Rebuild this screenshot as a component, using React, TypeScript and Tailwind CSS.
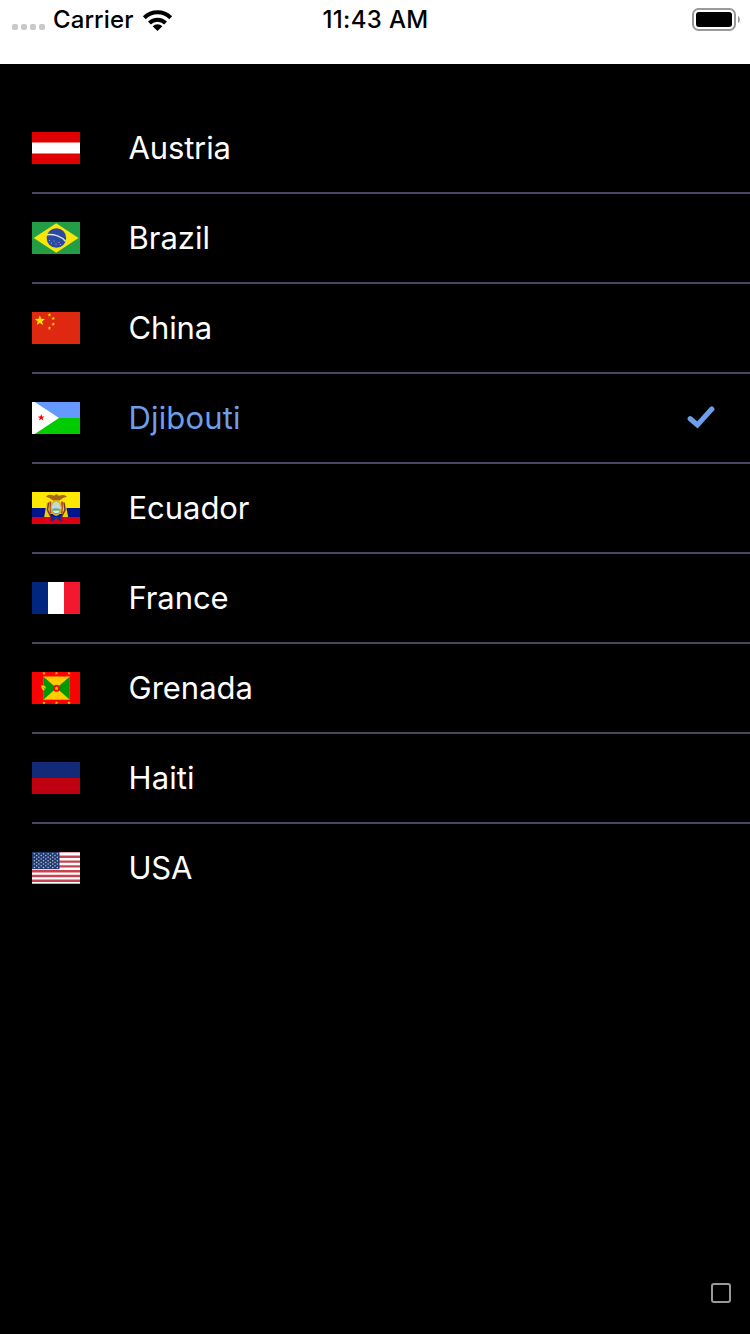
import React from 'react';

const star = (cx: number, cy: number, r: number) =>
  Array.from({ length: 10 }, (_, i) => {
    const a = (Math.PI * i) / 5 - Math.PI / 2;
    const q = i % 2 ? r * 0.42 : r;
    return `${cx + q * Math.cos(a)},${cy + q * Math.sin(a)}`;
  }).join(' ');

const dot = (cx: number, cy: number, r: number, fill: string) => <circle cx={cx} cy={cy} r={r} fill={fill} />;

const flags: Record<string, React.ReactNode> = {
  Austria: (
    <>
      <path fill="#df0000" d="M0 0h48v32H0z" />
      <path fill="#fff" d="M0 10.4h48v11.2H0z" />
    </>
  ),
  Brazil: (
    <>
      <path fill="#229e45" d="M0 0h48v32H0z" />
      <path fill="#f8e509" d="M1.7 16 24.2 1.3 46.5 16 24.2 30.7z" />
      <circle cx="24.4" cy="16" r="9.8" fill="#2b49a3" />
      <path d="M15 12.8c7-.9 14.5 1.6 18.7 6.6" fill="none" stroke="#d5e3e6" strokeWidth="1.5" />
      {dot(17.5, 18.5, 0.6, '#a9bde0')}
      {dot(19.5, 21, 0.6, '#a9bde0')}
      {dot(22, 19, 0.5, '#a9bde0')}
      {dot(24, 22, 0.6, '#a9bde0')}
      {dot(27, 20.5, 0.6, '#a9bde0')}
      {dot(28.5, 22.5, 0.6, '#a9bde0')}
      {dot(26, 13, 0.4, '#a9bde0')}
    </>
  ),
  China: (
    <>
      <path fill="#de2910" d="M0 0h48v32H0z" />
      <polygon points={star(7.9, 8.7, 5.4)} fill="#ffde00" />
      <polygon points={star(17.4, 2.9, 1.9)} fill="#ffde00" />
      <polygon points={star(21.2, 6.5, 1.9)} fill="#ffde00" />
      <polygon points={star(21.2, 12.2, 1.9)} fill="#ffde00" />
      <polygon points={star(17.4, 16.1, 1.9)} fill="#ffde00" />
    </>
  ),
  Djibouti: (
    <>
      <path fill="#0c0" d="M0 16h48v16H0z" />
      <path fill="#69f" d="M0 0h48v16H0z" />
      <path fill="#fffefe" d="M0 0h2.8L27 16 2.8 32H0z" />
      <polygon points={star(9.2, 15.6, 3.5)} fill="red" />
    </>
  ),
  Ecuador: (
    <>
      <path fill="#ffe800" d="M0 0h48v16H0z" />
      <path fill="#00148e" d="M0 16h48v9H0z" />
      <path fill="#da0010" d="M0 25h48v7H0z" />
      <path fill="#f0d000" d="m14.5 11-2.3 14h6v-3h12v3h6L33.5 11z" />
      <path fill="#a5641c" d="M14 4.8c2-2.4 5-2.4 8-1L24.3 2 27 3.8c3-1.4 6-1.2 8 1l-4 1.2-3.5 2.5H21L17.5 6z" />
      <path d="M16.5 10.5 15.5 18l3.5 7M32 10.5l1 7.5-3.5 7" fill="none" stroke="#6b3a22" strokeWidth="1.5" />
      <path d="m18.3 9.5.4 12M30.1 9.5l-.4 12" fill="none" stroke="#c0382c" strokeWidth="1.8" />
      <path fill="#1b298f" d="m18.5 23 5.7 3 5.7-3-1 4 1.5 2h-2l-4.2-2.5L21 29h-2z" />
      <ellipse cx="24.2" cy="16" rx="5.7" ry="7.9" fill="#dcb018" />
      <ellipse cx="24.2" cy="16" rx="4.4" ry="6.5" fill="#b4dfe6" />
      <path fill="#79a878" d="M20 17.5c3-2 5-1 8.4-.3-.2 3.4-1.9 5.1-4.1 5.3-2.3-.2-3.9-1.9-4.3-5z" />
      <path fill="#d5ecec" d="M20.6 18.8h7.2L26 21h-3.5z" />
      {dot(24.2, 12, 0.9, '#f0d85a')}
      {dot(24.2, 28, 1, '#b01b2a')}
    </>
  ),
  France: (
    <>
      <path fill="#fff" d="M0 0h48v32H0z" />
      <path fill="#00267f" d="M0 0h16v32H0z" />
      <path fill="#f31830" d="M32 0h16v32H32z" />
    </>
  ),
  Grenada: (
    <>
      <path fill="red" d="M0 0h48v32H0z" />
      <path fill="#fc0" d="M11.3 4.5h26.5v23.2H11.3z" />
      <path fill="#090" d="m11.3 4.5 13.2 11.6-13.2 11.6zM37.8 4.5 24.5 16.1l13.3 11.6z" />
      <circle cx="24.5" cy="16.3" r="3.5" fill="red" />
      <polygon points={star(24.5, 16.4, 2.4)} fill="#fc0" />
      <path d="M9.8 13.4c.4 3 1.2 4.1 2.6 4.7M10 14c2 .1 3.2 1 3.1 2.5" fill="none" stroke="#fc0" strokeWidth="1.6" />
      {[12, 24.5, 37].map((x) => (
        <g key={x}>
          <polygon points={star(x, 1.3, 1.8)} fill="#fc0" />
          <polygon points={star(x, 30.8, 1.8)} fill="#fc0" />
        </g>
      ))}
    </>
  ),
  Haiti: (
    <>
      <path fill="#112b79" d="M0 0h48v16H0z" />
      <path fill="#be0010" d="M0 16h48v16H0z" />
    </>
  ),
  USA: (
    <>
      <path fill="#fff" d="M0 0h48v32H0z" />
      <path fill="#d98c94" d="M0 0h48v.8H0zM0 31.2h48v.8H0z" />
      {[1, 2, 3, 4, 5, 6].map((i) => (
        <path key={i} fill="#c7434f" d={`M0 ${i * 4.8 - 1.2}h48v2.4H0z`} />
      ))}
      <path fill="#233c70" d="M0 0h27.5v17.2H0z" />
      {Array.from({ length: 50 }, (_, n) => {
        const row = Math.floor(n / 11) * 2 + (n % 11 > 5 ? 1 : 0);
        const col = n % 11 > 5 ? (n % 11) - 5.5 : n % 11;
        return <circle key={n} cx={2.3 + col * 4.6} cy={1.8 + row * 1.72} r="0.75" fill="#b9c2d4" />;
      })}
    </>
  ),
};

const countries = [
  { name: 'Austria', tracking: 'tracking-[-0.15px]' },
  { name: 'Brazil', tracking: 'tracking-[0px]' },
  { name: 'China', tracking: 'tracking-[-0.15px]' },
  { name: 'Djibouti', tracking: 'tracking-[0.15px]' },
  { name: 'Ecuador', tracking: 'tracking-[-0.05px]' },
  { name: 'France', tracking: 'tracking-[-0.1px]' },
  { name: 'Grenada', tracking: 'tracking-[0px]' },
  { name: 'Haiti', tracking: 'tracking-[0.1px]' },
  { name: 'USA', tracking: 'tracking-[-0.2px]' },
];

function StatusBar() {
  return (
    <header className="grid h-16 grid-cols-3 items-start bg-white text-[24px] leading-[40px] font-medium text-black">
      <div className="flex h-10 items-center pl-3">
        <div className="mt-[14px] flex gap-[3px]">
          {[0, 1, 2, 3].map((i) => (
            <span key={i} className="size-[6px] rounded-[2px] bg-[#c9c9c9]" />
          ))}
        </div>
        <span className="ml-2 w-[89px] tracking-[0.1px]">Carrier</span>
        <svg width="31" height="24" viewBox="0 0 31 24" className="shrink-0">
          <path d="M15.5 23 10.6 18.2a7 7 0 0 1 9.8 0z" />
          <path d="M7.4 15a11.6 11.6 0 0 1 16.2 0" fill="none" stroke="#000" strokeWidth="4" />
          <path d="M2.3 9.7a19 19 0 0 1 26.4 0" fill="none" stroke="#000" strokeWidth="4" />
        </svg>
      </div>
      <div className="pl-px text-center tracking-[0.35px]">11:43 AM</div>
      <div className="flex h-10 items-center justify-end pr-[9px]">
        <svg width="49" height="24" viewBox="0 0 49 24">
          <rect x="1" y="1" width="42" height="21" rx="5.5" fill="none" stroke="#999" strokeWidth="2" />
          <rect x="4" y="4" width="36" height="15" rx="3" />
          <path d="M46 8c2.5 1 2.5 6 0 7z" fill="#999" />
        </svg>
      </div>
    </header>
  );
}

export default function App() {
  const selected = 'Djibouti';
  return (
    <div className="flex h-[1334px] w-[750px] flex-col overflow-hidden bg-black font-['Inter',sans-serif]">
      <StatusBar />
      <main className="flex-1 pt-10">
        <ul className="pl-8">
          {countries.map(({ name, tracking }) => (
            <li
              key={name}
              className="flex h-[90px] items-center border-b-2 border-[#484764] pr-[34px] last:border-transparent"
            >
              <svg width="48" height="32" viewBox="0 0 48 32" className="mr-[48.5px] shrink-0">
                {flags[name]}
              </svg>
              <span
                className={`flex-1 text-[31px] leading-10 font-normal ${tracking} ${name === selected ? 'text-[#6c9eeb]' : 'text-white'}`}
              >
                {name}
              </span>
              {name === selected && (
                <svg width="30" height="26" viewBox="0 0 30 26">
                  <path
                    d="m4.2 13.7 7.2 6.2L25.8 4.1"
                    fill="none"
                    stroke="#6c9eeb"
                    strokeWidth="5.2"
                    strokeLinecap="round"
                    strokeLinejoin="miter"
                  />
                </svg>
              )}
            </li>
          ))}
        </ul>
      </main>
      <footer className="flex justify-end pr-[19px] pb-[31px]">
        <span className="size-5 rounded-[3px] border-2 border-[#999]" />
      </footer>
    </div>
  );
}
